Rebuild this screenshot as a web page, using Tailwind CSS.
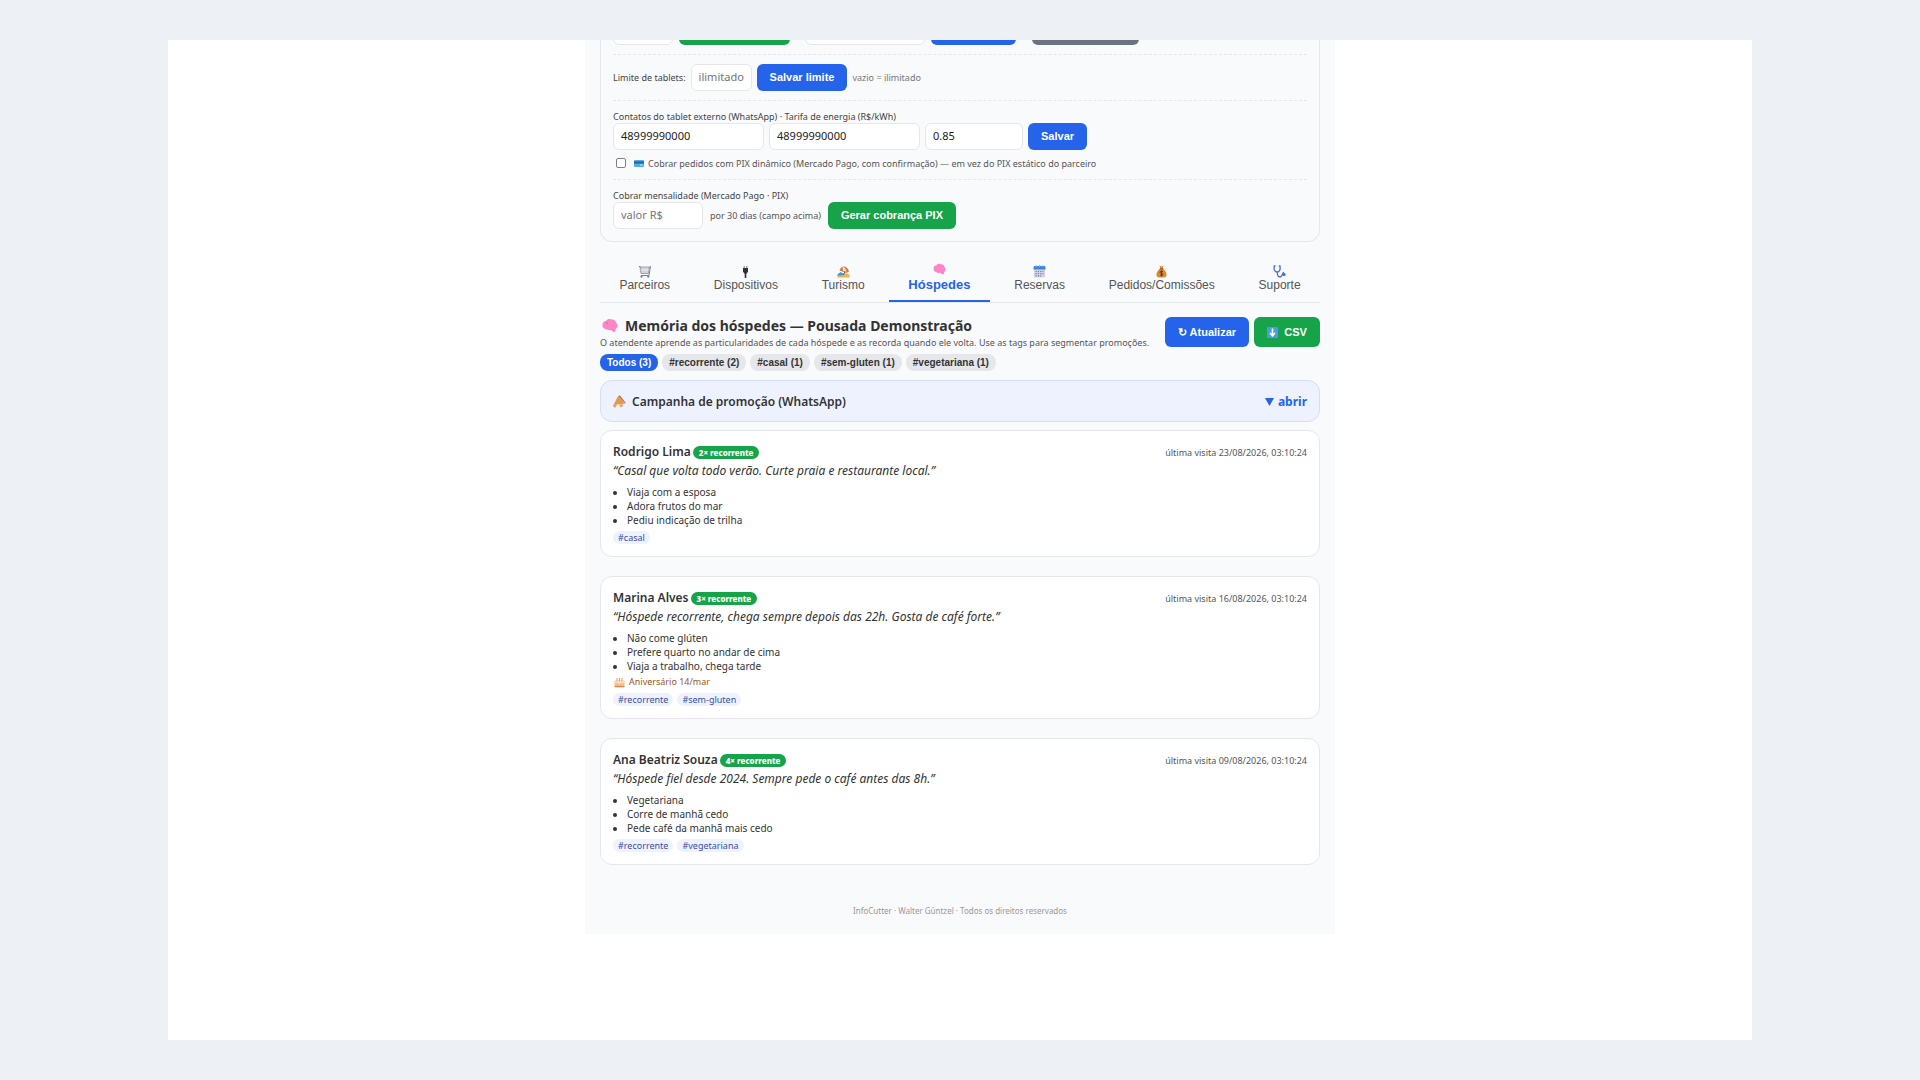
<!DOCTYPE html>
<html lang="pt-BR">
<head>
<meta charset="utf-8">
<title>Memória dos hóspedes — Pousada Demonstração</title>
<script src="https://cdn.jsdelivr.net/npm/@tailwindcss/browser@4"></script>
</head>
<body class="flex min-h-screen bg-[#edf1f6] px-[168px] py-10 font-['Noto_Sans','Open_Sans',sans-serif] text-[#333]">
<div class="flex flex-1 items-start justify-center overflow-hidden bg-white">
<div class="w-full max-w-[750px] bg-[#f9fafc] px-[15px]">

  <!-- Configuração do parceiro -->
  <section class="rounded-b-xl border-x border-b border-[#e5e7eb] px-3 pb-3 text-[9px] leading-[13px] text-[#444]">
    <form class="-mt-[22px] flex pb-[9px]">
      <input aria-label="Dias" class="h-[27px] w-[60px] rounded-md border border-[#e5e7eb] bg-white px-2 text-[11px]">
      <button type="button" aria-label="Liberar" class="ml-[6px] h-[27px] w-[111px] rounded-md bg-[#16a34a]"></button>
      <input aria-label="Senha" class="ml-[15px] h-[27px] w-[120px] rounded-md border border-[#e5e7eb] bg-white px-2 text-[11px]">
      <button type="button" aria-label="Trocar senha" class="ml-[6px] h-[27px] w-[85px] rounded-md bg-[#2563eb]"></button>
      <button type="button" aria-label="Bloquear" class="ml-4 h-[27px] w-[107px] rounded-md bg-[#6b7280]"></button>
    </form>
    <form class="flex items-center gap-[5px] border-t border-dashed border-[#e5e7eb] py-[9px]">
      <label for="limite">Limite de tablets:</label>
      <input id="limite" placeholder="ilimitado" class="h-[27px] w-[61px] rounded-md border border-[#e5e7eb] bg-white px-[7px] pb-0.5 text-[11px] text-[#222] placeholder:text-[#757575]">
      <button type="button" class="h-[27px] rounded-md bg-[#2563eb] px-[13px] font-['Liberation_Sans',sans-serif] text-[11px] font-bold text-white">Salvar limite</button>
      <span class="text-[#777]">vazio = ilimitado</span>
    </form>
    <form class="border-t border-dashed border-[#e5e7eb] py-[9px]">
      <label for="contato1" class="block">Contatos do tablet externo (WhatsApp) · Tarifa de energia (R$/kWh)</label>
      <div class="flex gap-[5px]">
        <input id="contato1" value="48999990000" class="h-[27px] w-[151px] rounded-md border border-[#e5e7eb] bg-white px-[7px] pb-0.5 text-[11px] text-[#222]">
        <input aria-label="Segundo contato" value="48999990000" class="h-[27px] w-[151px] rounded-md border border-[#e5e7eb] bg-white px-[7px] pb-0.5 text-[11px] text-[#222]">
        <input aria-label="Tarifa de energia" value="0.85" class="h-[27px] w-[98px] rounded-md border border-[#e5e7eb] bg-white px-[7px] pb-0.5 text-[11px] text-[#222]">
        <button type="button" class="h-[27px] rounded-md bg-[#2563eb] px-[13px] font-['Liberation_Sans',sans-serif] text-[11px] font-bold text-white">Salvar</button>
      </div>
      <label class="mt-[6px] flex h-[14px] items-center pl-[3px] text-[9px] text-[#555]">
        <input type="checkbox" class="size-[10px] appearance-none rounded-[2px] border border-[#8a7f7f] bg-white">
        <svg class="ml-2 mr-1 h-[10px] w-[10px]" viewBox="0 0 10 10"><rect y="2" width="10" height="7" rx="1" fill="#4aaee8"/><rect y="3.500" width="10" height="2" fill="#2f5f86"/><rect x="6" y="6.500" width="3" height="1" fill="#bde3f8"/></svg>
        Cobrar pedidos com PIX dinâmico (Mercado Pago, com confirmação) — em vez do PIX estático do parceiro
      </label>
    </form>
    <form class="border-t border-dashed border-[#e5e7eb] pt-[9px]">
      <label for="valor" class="block">Cobrar mensalidade (Mercado Pago · PIX)</label>
      <div class="flex items-center gap-[7px]">
        <input id="valor" placeholder="valor R$" class="h-[27px] w-[90px] rounded-md border border-[#e5e7eb] bg-white px-[7px] pb-0.5 text-[11px] text-[#222] placeholder:text-[#757575]">
        <span class="text-[9px] text-[#555]">por 30 dias (campo acima)</span>
        <button type="button" class="h-[27px] rounded-md bg-[#16a34a] px-[13px] font-['Liberation_Sans',sans-serif] text-[11px] font-bold text-white">Gerar cobrança PIX</button>
      </div>
    </form>
  </section>

  <!-- Abas -->
  <nav class="mt-[14px] flex h-[47px] gap-[5px] border-b border-[#e5e7eb] font-['Liberation_Sans',sans-serif] text-[12px] leading-[14px] text-[#555]">
    <button type="button" class="flex flex-auto flex-col items-center justify-center border-b-2 border-transparent">
      <svg class="size-[13px]" viewBox="0 0 13 13"><path d="M1 1.500h1.500M12.500 1l-1.500 9.500H3" fill="none" stroke="#6f7fb5"/><path d="M2 2h9.500l-1 6.500H3z" fill="#c5c7cd" stroke="#8f929c" stroke-width=".8"/><path d="M4.800 2.500v5.500M7 2.500v5.500M9 2.500v5.500M2.500 5h8.500" stroke="#f3f3f5" stroke-width=".7"/><circle cx="3.500" cy="11.700" r="1.100" fill="#6f7fb5"/><circle cx="10.300" cy="11.700" r="1.100" fill="#6f7fb5"/></svg>
      Parceiros
    </button>
    <button type="button" class="flex flex-auto flex-col items-center justify-center border-b-2 border-transparent">
      <svg class="size-[13px]" viewBox="0 0 13 13"><path d="M5.200 1v3M7.800 1v3" stroke="#777" stroke-width="1"/><path d="M4 3h5v3.500l-1.200 2H5.200L4 6.500z" fill="#33303a"/><path d="M6.500 8v5" stroke="#33303a" stroke-width="1.600"/></svg>
      Dispositivos
    </button>
    <button type="button" class="flex flex-auto flex-col items-center justify-center border-b-2 border-transparent">
      <svg class="size-[13px]" viewBox="0 0 13 13"><path d="M.5 9.500C3 8 8 7.500 12.500 9.500v3H.5z" fill="#efb25c"/><path d="M.5 9.500l3-2.500 4 2.500-3 1h-4z" fill="#3b9bd8"/><path d="M2.500 5.500C4 0 10 0 12 6.500L9.500 8z" fill="#c97b45"/><path d="M5.500 2C7.500 1.500 9 4 9.500 7.500L6 6z" fill="#fae3cd"/><path d="M8 6l-1.500 4" stroke="#875b3c"/></svg>
      Turismo
    </button>
    <button type="button" aria-current="page" class="flex flex-auto flex-col items-center justify-center border-b-2 border-[#2563eb] text-[13px] leading-[18px] font-bold text-[#2563eb]">
      <svg class="size-[13px]" viewBox="0 0 16 16"><path d="M1 8C0 5 2 3 4 3c1-2 4-2.500 5.500-1.500C12 1 14 3 14 4.500c2 1.500 2 5 0 6l-1 3.500-2.500-.5L9.500 12C7 12.500 5 12 4 11 2 11 1 10 1 8z" fill="#fb86c5"/></svg>
      Hóspedes
    </button>
    <button type="button" class="flex flex-auto flex-col items-center justify-center border-b-2 border-transparent">
      <svg class="size-[13px]" viewBox="0 0 13 13"><rect x="1" y="1.500" width="11" height="11" rx="1.200" fill="#d3d4e3"/><path d="M.5 2.200a1.200 1.200 0 0 1 1.200-1.200h9.600a1.200 1.200 0 0 1 1.200 1.200V4.500H.5z" fill="#3f86d6"/><path d="M3 0v2M6.500 0v2M10 0v2" stroke="#8ab8ea"/><path d="M2.500 6.500h8M2.500 8.700h8M2.500 10.900h6" stroke="#8083a8" stroke-width="1.200" stroke-dasharray="1.300 1"/></svg>
      Reservas
    </button>
    <button type="button" class="flex flex-auto flex-col items-center justify-center border-b-2 border-transparent">
      <svg class="size-[13px]" viewBox="0 0 13 13"><path d="M4.500.5l2 1 2-1-.8 3H5.300z" fill="#d99038"/><path d="M5 3.500h3c2 2 4 4 3.500 7-.3 1.500-1.500 2-5 2s-4.700-.5-5-2c-.5-3 1.500-5 3.500-7z" fill="#d88a35"/><path d="M4.800 3.800h3.400" stroke="#7c4a1c"/><path d="M8 6.800c-1.500-1-3-.5-3 .4 0 1.400 3 .8 3 2.200 0 1-1.700 1.400-3 .5M6.500 5.500v6" fill="none" stroke="#5d3512" stroke-width=".9"/></svg>
      Pedidos/Comissões
    </button>
    <button type="button" class="flex flex-auto flex-col items-center justify-center border-b-2 border-transparent">
      <svg class="size-[13px]" viewBox="0 0 13 13" fill="none"><path d="M2.500 1H1.300C.5 5 2 7 4.200 7S7.700 5 7 1H5.800" stroke="#4a6fd6" stroke-width="1.300"/><path d="M4.200 7c0 3 .8 5 3 5s2-4.500 3.800-4.500" stroke="#6b5fb4" stroke-width="1.300"/><circle cx="11" cy="9.500" r="1.700" fill="#3d7be0"/></svg>
      Suporte
    </button>
  </nav>

  <!-- Cabeçalho -->
  <header class="mt-[14px] flex items-start justify-between">
    <div>
      <h1 class="flex items-center text-[14px] leading-[18px] font-bold">
        <svg class="ml-0.5 mr-[7px] size-4" viewBox="0 0 16 16"><path d="M.5 8C0 5 2 3 4 3c1-2 4-2.500 5.500-1.500C12 1 14 3 14 4.500c2 1.500 2 5 0 6l-1 3.500-2.500-.5L9.500 12C7 12.500 5 12 4 11 2 11 .7 10 .5 8z" fill="#fb86c5"/><path d="M4 4.500c.5 1 1.500 1 2 .5" fill="none" stroke="#c94f92" stroke-width=".8"/></svg>
        Memória dos hóspedes — Pousada Demonstração
      </h1>
      <p class="text-[9px] leading-[15px] text-[#555]">O atendente aprende as particularidades de cada hóspede e as recorda quando ele volta. Use as tags para segmentar promoções.</p>
    </div>
    <div class="flex gap-[5px] font-['Liberation_Sans',sans-serif] text-[11px] font-bold text-white">
      <button type="button" class="h-[30px] w-[84px] rounded-md bg-[#2563eb]">↻ Atualizar</button>
      <button type="button" class="flex h-[30px] w-[66px] items-center justify-center gap-[6px] rounded-md bg-[#16a34a]">
        <svg class="size-[11px]" viewBox="0 0 11 11"><rect width="11" height="11" rx="1" fill="#4a9be8"/><path d="M5.500 1.500v7M3 6l2.500 2.700L8 6" fill="none" stroke="#fff" stroke-width="1.600"/></svg>
        CSV
      </button>
    </div>
  </header>
  <div class="mt-1 flex gap-1 font-['Liberation_Sans',sans-serif] text-[10px] leading-[17px] font-bold">
    <button type="button" class="rounded-lg bg-[#2563eb] px-[7px] text-white">Todos (3)</button>
    <button type="button" class="rounded-lg bg-[#e5e7eb] px-[7px]">#recorrente (2)</button>
    <button type="button" class="rounded-lg bg-[#e5e7eb] px-[7px]">#casal (1)</button>
    <button type="button" class="rounded-lg bg-[#e5e7eb] px-[7px]">#sem-gluten (1)</button>
    <button type="button" class="rounded-lg bg-[#e5e7eb] px-[7px]">#vegetariana (1)</button>
  </div>

  <button type="button" class="mt-[9px] flex h-[42px] w-full items-center rounded-xl border border-[#d3ddfd] bg-[#eef2ff] px-3 pt-px text-[12px] font-semibold">
    <svg class="mr-[6px] size-[13px]" viewBox="0 0 13 13"><path d="M.5 10L5 1l7.500 7.500z" fill="#e39a4e"/><path d="M5 1l2-.5 5.500 7v1z" fill="#b9723a"/><path d="M.5 10v1.500l2 .8L3.500 10zM6.500 9.500l.8 2.500 2.700-1-.8-2" fill="#efae62" stroke="#d98e43" stroke-width=".5"/></svg>
    Campanha de promoção (WhatsApp)
    <span class="ml-auto flex items-center gap-1 font-bold text-[#2563eb]"><svg class="h-2 w-[9px]" viewBox="0 0 9 8"><path d="M0 0h9L4.500 8z" fill="#2563eb"/></svg>abrir</span>
  </button>

  <!-- Hóspedes -->
  <main class="mt-2 flex flex-col gap-[19px]">
    <article class="rounded-xl border border-[#e5e7eb] bg-white px-3 py-3">
      <div class="flex h-[18px] items-center">
        <h2 class="text-[12px] font-semibold">Rodrigo Lima</h2>
        <span class="ml-0.5 rounded-full bg-[#16a34a] px-[6px] text-[8px] leading-[13px] font-extrabold text-white">2× recorrente</span>
        <time class="ml-auto pt-px text-[9px] text-[#555]">última visita 23/08/2026, 03:10:24</time>
      </div>
      <p class="text-[12px] leading-5 italic">“Casal que volta todo verão. Curte praia e restaurante local.”</p>
      <ul class="mt-1 list-disc pl-[14px] text-[10px] leading-[14px]"><li>Viaja com a esposa</li><li>Adora frutos do mar</li><li>Pediu indicação de trilha</li></ul>
      <div class="mt-1 flex gap-1 text-[9px] leading-[13px] text-[#3b4f9e]"><span class="rounded-full bg-[#eef2ff] px-[5px]">#casal</span></div>
    </article>
    <article class="rounded-xl border border-[#e5e7eb] bg-white px-3 py-3">
      <div class="flex h-[18px] items-center">
        <h2 class="text-[12px] font-semibold">Marina Alves</h2>
        <span class="ml-0.5 rounded-full bg-[#16a34a] px-[6px] text-[8px] leading-[13px] font-extrabold text-white">3× recorrente</span>
        <time class="ml-auto pt-px text-[9px] text-[#555]">última visita 16/08/2026, 03:10:24</time>
      </div>
      <p class="text-[12px] leading-5 italic">“Hóspede recorrente, chega sempre depois das 22h. Gosta de café forte.”</p>
      <ul class="mt-1 list-disc pl-[14px] text-[10px] leading-[14px]"><li>Não come glúten</li><li>Prefere quarto no andar de cima</li><li>Viaja a trabalho, chega tarde</li></ul>
      <p class="mt-0.5 flex items-center gap-1 pl-px text-[9px] leading-[14px] text-[#9a5528]">
        <svg class="size-[11px]" viewBox="0 0 11 11"><rect x=".5" y="3.500" width="10" height="7" rx="1" fill="#f0bd85"/><path d="M.5 5.500c1.500 2 2.500 0 3.500 1s2 1 3 0 2 1 3.500-.5v-2H.5z" fill="#f9dcc0"/><path d="M3 1v3M5.500 1v3M8 1v3" stroke="#e59a6c"/><path d="M.5 9.500h10" stroke="#d48b55"/></svg>
        Aniversário 14/mar
      </p>
      <div class="mt-1 flex gap-1 text-[9px] leading-[13px] text-[#3b4f9e]"><span class="rounded-full bg-[#eef2ff] px-[5px]">#recorrente</span><span class="rounded-full bg-[#eef2ff] px-[5px]">#sem-gluten</span></div>
    </article>
    <article class="rounded-xl border border-[#e5e7eb] bg-white px-3 py-3">
      <div class="flex h-[18px] items-center">
        <h2 class="text-[12px] font-semibold">Ana Beatriz Souza</h2>
        <span class="ml-0.5 rounded-full bg-[#16a34a] px-[6px] text-[8px] leading-[13px] font-extrabold text-white">4× recorrente</span>
        <time class="ml-auto pt-px text-[9px] text-[#555]">última visita 09/08/2026, 03:10:24</time>
      </div>
      <p class="text-[12px] leading-5 italic">“Hóspede fiel desde 2024. Sempre pede o café antes das 8h.”</p>
      <ul class="mt-1 list-disc pl-[14px] text-[10px] leading-[14px]"><li>Vegetariana</li><li>Corre de manhã cedo</li><li>Pede café da manhã mais cedo</li></ul>
      <div class="mt-1 flex gap-1 text-[9px] leading-[13px] text-[#3b4f9e]"><span class="rounded-full bg-[#eef2ff] px-[5px]">#recorrente</span><span class="rounded-full bg-[#eef2ff] px-[5px]">#vegetariana</span></div>
    </article>
  </main>

  <footer class="pt-10 pb-[17px] text-center text-[8px] leading-3 text-[#999]">InfoCutter · Walter Güntzel · Todos os direitos reservados</footer>
</div>
</div>
</body>
</html>
